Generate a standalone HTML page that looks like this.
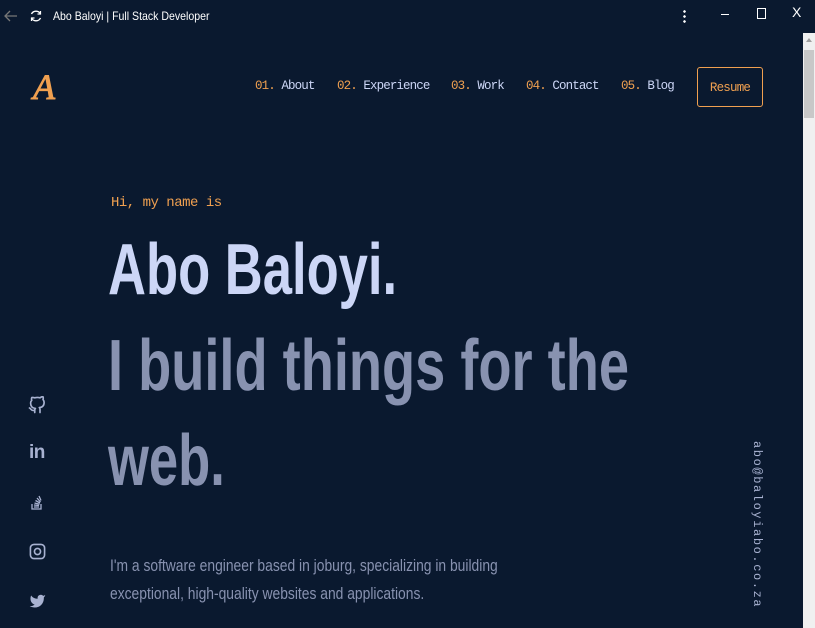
<!DOCTYPE html>
<html><head><meta charset="utf-8"><style>
*{margin:0;padding:0;box-sizing:border-box}
body{width:815px;height:628px;background:#0a192f;overflow:hidden;position:relative;font-family:"Liberation Sans",sans-serif}
.abs{position:absolute;white-space:nowrap}
.nav{font-family:"Liberation Mono",monospace;font-size:12.5px;color:#ccd6f6;top:79px;letter-spacing:-0.9px}
.nav b{font-weight:normal;color:#f0a050}
.big{font-weight:bold;font-size:72px;transform:scaleX(0.73);transform-origin:left top;line-height:72px}
.p{color:#8892b0;font-size:17px;transform:scaleX(0.815);transform-origin:left top;line-height:28px}
svg{position:absolute}
</style></head><body>
<svg style="left:3px;top:9px" width="16" height="14" viewBox="0 0 16 14"><path d="M14 7H2M7 2L2 7l5 5" stroke="#777" stroke-width="1.3" fill="none"/></svg>
<svg style="left:29px;top:9px" width="14" height="14" viewBox="0 0 14 14"><path d="M11.5 5A5 5 0 0 0 2.5 5M2.5 9a5 5 0 0 0 9 0" stroke="#fff" stroke-width="1.4" fill="none"/><path d="M11.5 2v3h-3M2.5 12V9h3" stroke="#fff" stroke-width="1.2" fill="none"/></svg>
<div class="abs" style="left:53px;top:9px;color:#fff;font-size:12px;transform:scaleX(0.88);transform-origin:left">Abo Baloyi | Full Stack Developer</div>
<div class="abs" style="left:683px;top:9px;width:3px;height:14px;background:radial-gradient(circle,#fff 1.2px,transparent 1.4px) 0 0/3px 5px"></div>
<div class="abs" style="left:721px;top:14px;width:8px;height:1px;background:#fff"></div>
<div class="abs" style="left:757px;top:8px;width:9px;height:11px;border:1px solid #fff"></div>
<div class="abs" style="left:792px;top:4px;color:#fff;font-size:14px">X</div>
<div class="abs" style="left:803px;top:33px;width:12px;height:595px;background:#f0f0f0"></div>
<div class="abs" style="left:804px;top:50px;width:10px;height:68px;background:#c8c8c8"></div>
<div class="abs" style="left:806px;top:38px;width:0;height:0;border:3px solid transparent;border-bottom:4px solid #a0a0a0;border-top:0"></div>
<div class="abs" style="left:33px;top:66px;color:#f0a050;font-family:'Liberation Serif',serif;font-style:italic;font-size:36px;-webkit-text-stroke:1px #f0a050">A</div>
<div class="abs nav" style="left:255px"><b>01.</b> About</div>
<div class="abs nav" style="left:337px"><b>02.</b> Experience</div>
<div class="abs nav" style="left:451px"><b>03.</b> Work</div>
<div class="abs nav" style="left:526px"><b>04.</b> Contact</div>
<div class="abs nav" style="left:621px"><b>05.</b> Blog</div>
<div class="abs" style="left:697px;top:67px;width:66px;height:40px;border:1px solid #f0a050;border-radius:3px;color:#f0a050;font-family:'Liberation Mono',monospace;font-size:12.5px;letter-spacing:-0.8px;text-align:center;line-height:40px">Resume</div>
<div class="abs" style="left:111px;top:195px;color:#f0a050;font-family:'Liberation Mono',monospace;font-size:14px;letter-spacing:-0.5px">Hi, my name is</div>
<div class="abs big" style="left:108px;top:234px;color:#ccd6f6">Abo Baloyi.</div>
<div class="abs big" style="left:108px;top:330px;color:#8892b0;transform:scaleX(0.753)">I build things for the</div>
<div class="abs big" style="left:108px;top:425px;color:#8892b0">web.</div>
<div class="abs p" style="left:110px;top:552px">I'm a software engineer based in joburg, specializing in building<br>exceptional, high-quality websites and applications.</div>
<div class="abs" style="left:750px;top:441px;writing-mode:vertical-rl;color:#a8b2d1;font-family:'Liberation Mono',monospace;font-size:12px;letter-spacing:1.6px">abo@baloyiabo.co.za</div>
<svg style="left:28px;top:396px" width="18" height="18" viewBox="0 0 24 24"><path d="M9 19c-5 1.5-5-2.5-7-3m14 6v-3.9a3.4 3.4 0 0 0-.9-2.6c3.1-.3 6.4-1.5 6.4-7a5.4 5.4 0 0 0-1.5-3.8 5 5 0 0 0-.1-3.8s-1.2-.3-3.9 1.5a13.4 13.4 0 0 0-7 0C6.3 1.6 5.100 2 5.1 2a5 5 0 0 0-.1 3.8A5.4 5.4 0 0 0 3.5 9.6c0 5.4 3.3 6.6 6.4 7a3.4 3.4 0 0 0-.9 2.6V22" stroke="#a8b2d1" stroke-width="2.2" fill="none" stroke-linecap="round" stroke-linejoin="round"/></svg>
<div class="abs" style="left:29px;top:442px;color:#a8b2d1;font-weight:bold;font-size:19px;letter-spacing:-0.5px">in</div>
<svg style="left:31px;top:494px" width="12" height="16" viewBox="0 0 12 16"><path d="M1 10v5h9v-5M3 13h5M3 11l5 .5M3.5 9l5 1.2M4.5 6.5l4.5 2.5M6 4l3.5 4M8 2l2 4.5" stroke="#a8b2d1" stroke-width="1.3" fill="none"/></svg>
<svg style="left:29px;top:543px" width="17" height="17" viewBox="0 0 24 24"><rect x="2" y="2" width="20" height="20" rx="5" stroke="#a8b2d1" stroke-width="2.3" fill="none"/><circle cx="12" cy="12" r="4.3" stroke="#a8b2d1" stroke-width="2.3" fill="none"/></svg>
<svg style="left:29px;top:593px" width="17" height="15" viewBox="0 0 24 20"><path d="M23 2a10 10 0 0 1-3 1.5 4.5 4.5 0 0 0-7.9 3v1A10.7 10.7 0 0 1 3 3s-4 9 5 13a11.6 11.6 0 0 1-7 2c9 5 20 0 20-11.5a4.5 4.5 0 0 0-.1-.8A7.7 7.7 0 0 0 23 2z" fill="#a8b2d1"/></svg>
</body></html>
